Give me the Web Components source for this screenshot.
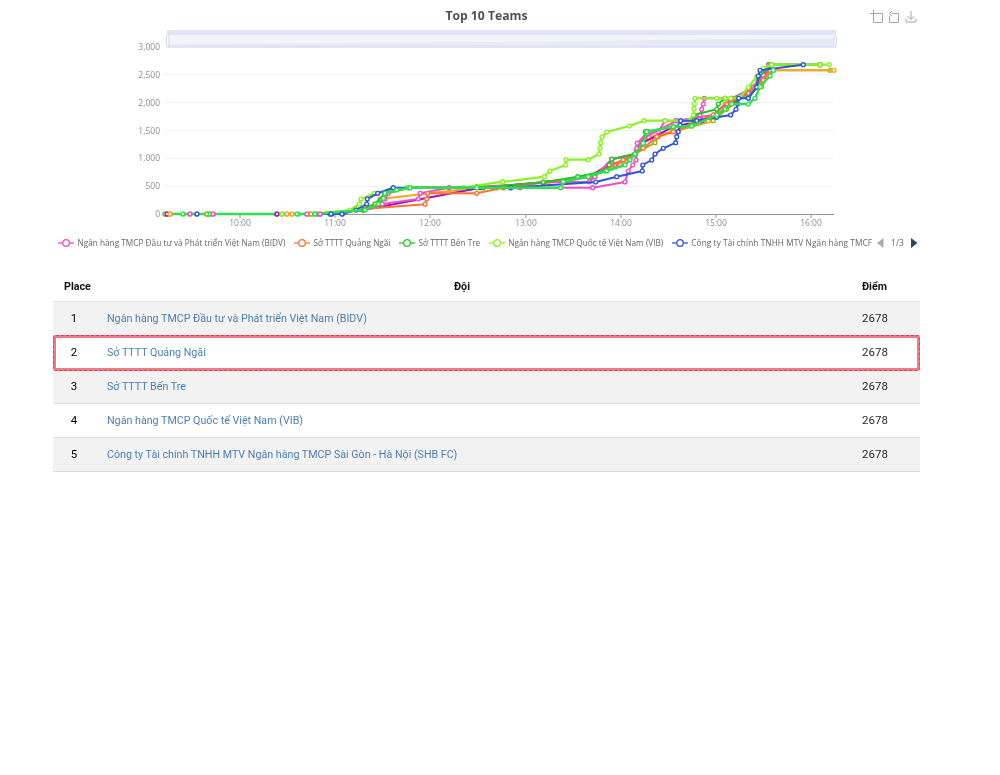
<!DOCTYPE html>
<html lang="vi"><head><meta charset="utf-8"><title>Top 10 Teams</title>
<style>html,body{margin:0;background:#fff;font-family:Roboto,"Liberation Sans",sans-serif}
body{height:775px;overflow:hidden;padding:0 80px 0 53px;box-sizing:border-box;filter:blur(.35px)}</style></head>
<body>
<score-chart title-text="Top 10 Teams"></score-chart>
<team-table>
<team-row place="1" score="2678">Ngân hàng TMCP Đầu tư và Phát triển Việt Nam (BIDV)</team-row>
<team-row place="2" score="2678" marked>Sở TTTT Quảng Ngãi</team-row>
<team-row place="3" score="2678">Sở TTTT Bến Tre</team-row>
<team-row place="4" score="2678">Ngân hàng TMCP Quốc tế Việt Nam (VIB)</team-row>
<team-row place="5" score="2678">Công ty Tài chính TNHH MTV Ngân hàng TMCP Sài Gòn - Hà Nội (SHB FC)</team-row>
</team-table>
<script>
const SERIES=[
{c:'#a3b50c',w:2,a:[108,642,235,642,455,642,540,642,700,630,745,612,765,580,840,563,1060,563],b:[130,547,270,530,330,495,370,480,405,462,465,428,475,410,520,395,640,362,680,328,745,280,785,260,800,225,820,211,990,211]},
{c:'#f5a623',w:2,a:[120,642,485,642,540,642,680,630,735,612,750,597,1043,563],b:[145,547,265,530,360,495,405,462,445,412,515,395,625,362,675,312,790,245,820,211,1002,211]},
{c:'#a012c0',w:2,a:[110,642,440,642,560,642,700,630,1052,563],b:[130,547,268,530,325,495,335,478,405,462,430,428,520,380,605,362,650,345,720,292,775,245,815,194,960,194]},
{c:'#f24bc4',w:2,a:[250,642,530,642,570,642,700,630,757,612,865,597,871,580,957,563,1100,563],b:[60,563,278,563,375,546,385,513,398,495,408,480,410,450,412,430,445,395,475,395,495,362,528,362,575,362,600,345,605,328,610,312,613,295,676,295,695,295,720,292,745,280,760,262,775,240,795,210,806,194,960,194]},
{c:'#f24bc4',w:2,a:[180,642,470,642,570,642,700,630,745,612,765,597,775,580,835,563,1040,560,1200,553],b:[130,547,268,545,285,530,335,478,345,495,405,462,410,445,435,412,530,362,640,345,695,295,760,262,790,225,806,194]},
{c:'#ff7138',w:2,a:[120,642,600,642,690,628,885,613,890,597,893,580,1040,580,1120,563],b:[10,563,130,547,270,530,370,480,430,445,470,410,520,395,640,345,680,312,720,292,790,240,810,211]},
{c:'#25c425',w:2,a:[230,642,600,642,700,630,735,612,765,580,835,563,1060,563],b:[130,547,233,530,315,513,328,495,335,478,405,462,430,428,436,395,520,380,575,378,582,345,650,328,655,312,676,295,715,293,745,293,770,262,778,230,812,194,960,194]},
{c:'#87f522',w:2.2,a:[160,642,240,642,455,642,555,642,660,630,688,612,693,597,733,580,830,563,1000,563,1118,545],b:[8,546,133,530,150,513,197,495,198,479,265,479,297,462,300,445,302,428,306,411,320,396,388,378,432,362,495,362,568,362,580,345,582,326,583,312,585,295,650,295,676,295,692,295,720,292,745,262,770,230,790,205,815,194,960,194,988,194]},
{c:'#2d55dc',w:2,a:[200,642,605,642,637,642,678,630,710,612,712,597,743,580,790,563,1142,563],b:[32,563,287,546,350,530,427,513,428,495,455,480,465,462,490,445,527,428,530,410,535,395,540,375,542,362,590,362,650,352,692,345,708,328,713,312,716,295,745,295,770,262,775,228,780,211,910,194]},
{c:'#2fe04e',w:2.4,a:[105,642,240,642,505,642,550,642,705,630,745,612,760,595,765,580,800,570,840,563,1040,563],b:[182,563,190,545,265,530,320,513,375,495,390,480,405,462,430,430,440,395,520,380,575,378,650,345,675,328,695,312,745,312,765,295,780,260,810,228,820,211]}
];
const DOTS=[[165,'#a3b50c'],[167,'#a012c0'],[170,'#f5a623'],[183,'#2fe04e'],[190,'#f24bc4'],[197,'#2d55dc'],[207,'#a3b50c'],[210,'#2fe04e'],[213,'#f24bc4'],[277,'#a012c0'],[282,'#87f522'],[287,'#f5a623'],[292,'#f5a623'],[297,'#2fe04e'],[307,'#f24bc4'],[311,'#a3b50c'],[315,'#2fe04e'],[320,'#f24bc4'],[331,'#2d55dc'],[342,'#2d55dc']];
function seriesSvg(){
 let out='';
 for(const s of SERIES){
  const p=[];
  for(let i=0;i<s.a.length;i+=2)p.push([130+s.a[i]/3,s.a[i+1]/3]);
  for(let i=0;i<s.b.length;i+=2)p.push([500+s.b[i]/3,s.b[i+1]/3]);
  out+=`<polyline fill="none" stroke="${s.c}" stroke-width="${s.w}" stroke-linejoin="round" points="${p.map(q=>q[0].toFixed(1)+','+q[1].toFixed(1)).join(' ')}"/>`;
  out+=p.map(q=>`<circle cx="${q[0].toFixed(1)}" cy="${q[1].toFixed(1)}" r="1.9" fill="#fff" stroke="${s.c}" stroke-width="1.4"/>`).join('');
 }
 out+=DOTS.map(d=>`<circle cx="${d[0]}" cy="214" r="1.9" fill="#fff" stroke="${d[1]}" stroke-width="1.4"/>`).join('');
 return out;
}
class ScoreChart extends HTMLElement{
 constructor(){super();
  const grid=[[74.6,'2,500'],[102.5,'2,000'],[130.7,'1,500'],[158.4,'1,000'],[186.4,'500']];
  const times=[[240,'10:00'],[335,'11:00'],[430,'12:00'],[526,'13:00'],[621,'14:00'],[716,'15:00'],[811,'16:00']];
  const legend=[['#f24bc4','Ngân hàng TMCP Đầu tư và Phát triển Việt Nam (BIDV)'],['#ff7138','Sở TTTT Quảng Ngãi'],['#25c425','Sở TTTT Bến Tre'],['#87f522','Ngân hàng TMCP Quốc tế Việt Nam (VIB)'],['#2d55dc','Công ty Tài chính TNHH MTV Ngân hàng TMCF']];
  this.attachShadow({mode:'open'}).innerHTML=`<style>
  :host{display:block;color:#666}
  .head{height:30px;display:flex;align-items:center;justify-content:center;position:relative}
  h2{margin:0;font:700 12.2px "Open Sans",sans-serif;color:#505050}
  .tools{position:absolute;right:2px;top:10px;display:flex;gap:3px}
  .tools svg{display:block;width:14px;height:14px;fill:none;stroke:#a6a6a6;stroke-width:1}
  svg.plot{display:block;width:867px;height:203px}
  svg.plot text{font:8.5px "Open Sans",sans-serif;fill:#8b8d95}
  .legend{height:19px;display:flex;align-items:center;padding:0 3px 0 5px;font:8.25px "Open Sans",sans-serif;color:#666;white-space:nowrap}
  .item{display:flex;align-items:center;gap:3.5px;margin-right:8.5px;flex:none}
  .item:nth-child(5){margin-right:0}
  .item:nth-child(5) span{letter-spacing:.09px}
  .item svg{width:16px;height:10px;flex:none}
  .item span{display:block}
  .pager{display:flex;align-items:center;gap:7px;margin-left:5px;font-size:8.5px;flex:none}
  </style>
  <div class="head"><h2>${this.getAttribute('title-text')}</h2>
   <div class="tools">
    <svg viewBox="0 0 14 14"><path d="M3.500 0v12.500h9v-9H0"/></svg>
    <svg viewBox="0 0 14 14"><path d="M4.500 3.500h7v9h-9V5.500M5 1 2.500 3.500 5 6"/></svg>
    <svg viewBox="0 0 14 14"><path d="M2 8.500v3.500h10V8.500M7 1v8.500M3.500 6 7 9.500 10.500 6"/></svg>
   </div></div>
  <svg class="plot" viewBox="53 30 867 203">
   <rect x="167" y="30" width="669" height="18" fill="#dfe5f5"/>
   <rect x="167" y="35" width="669" height="9.500" fill="#f3f5fb"/>
   <path d="M167 44h669v-5.500C700 39 560 41 500 42z" fill="#e6eaf6"/>
   <rect x="166.500" y="35" width="2.500" height="11" rx="1.200" fill="#fff" stroke="#c3cce6" stroke-width=".8"/>
   <rect x="834" y="36" width="2.500" height="10" rx="1.200" fill="#fff" stroke="#c3cce6" stroke-width=".8"/>
   ${grid.map(g=>`<line x1="165" x2="834" y1="${g[0]}" y2="${g[0]}" stroke="#eef1f8"/><text x="160" y="${g[0]+3}" text-anchor="end">${g[1]}</text>`).join('')}
   <text x="160" y="49.500" text-anchor="end">3,000</text>
   <text x="160" y="216.500" text-anchor="end">0</text>
   <line x1="165" x2="834" y1="214.500" y2="214.500" stroke="#8f939c"/>
   ${times.map(t=>`<line x1="${t[0]}" x2="${t[0]}" y1="214.500" y2="218" stroke="#8f939c"/><text x="${t[0]}" y="226" text-anchor="middle">${t[1]}</text>`).join('')}
   ${seriesSvg()}
  </svg>
  <div class="legend">
   ${legend.map((l,i)=>`<div class="item"><svg viewBox="0 0 16 10"><path d="M0 5h16" stroke="${l[0]}" stroke-width="1.300"/><circle cx="8" cy="5" r="3.300" fill="#fff" stroke="${l[0]}" stroke-width="1.300"/></svg><span>${l[1]}</span></div>`).join('')}
   <div class="pager"><svg width="7" height="10" viewBox="0 0 7 10"><path d="M6.500 0v10L0 5z" fill="#aaa"/></svg><span>1/3</span><svg width="7" height="10" viewBox="0 0 7 10"><path d="M0 0v10l6.500-5z" fill="#2f4554"/></svg></div>
  </div>`;
 }
}
customElements.define('score-chart',ScoreChart);
class TeamTable extends HTMLElement{
 constructor(){super();
  this.attachShadow({mode:'open'}).innerHTML=`<style>
  :host{display:block;margin-top:16px;font:10.7px/17px Roboto,"Noto Sans",sans-serif;color:#222}
  .h{display:grid;grid-template-columns:54px 710px 103px;height:34px;align-items:center;font-weight:700;color:#111;font-size:10.7px;box-sizing:border-box;padding-top:4px;border-bottom:1px solid #e4e4e4}
  .h span:first-child{padding-left:11px}.h span:nth-child(2){text-align:center}.h span:last-child{padding-left:45px}
  </style><div class="h"><span>Place</span><span>Đội</span><span>Điểm</span></div><slot></slot>`;
 }
}
customElements.define('team-table',TeamTable);
class TeamRow extends HTMLElement{
 constructor(){super();
  const marked=this.hasAttribute('marked');
  this.attachShadow({mode:'open'}).innerHTML=`<style>
  :host{display:grid;grid-template-columns:42px 12px 710px 103px;height:34px;align-items:center;position:relative;z-index:${marked?1:0};box-sizing:border-box;border-bottom:1px solid ${marked?'transparent':'#ddd'};background:${+this.getAttribute('place')%2?'#f2f2f2':'#fff'};color:#222}
  .p{text-align:center;color:#000;font-size:11.5px}.n{grid-column:3;color:#4a7fb5}.s{padding-left:45px;font-size:11.5px;color:#2a2a2a}
  .mark{position:absolute;left:0;right:0;top:-1px;bottom:-2px;box-sizing:border-box;border:3px solid rgba(235,70,92,.72);border-radius:3px;pointer-events:none}
  .mark::after{content:"";position:absolute;inset:-3px;border:1px dashed rgba(205,30,60,.6);border-radius:3px}
  </style><span class="p">${this.getAttribute('place')}</span><span class="n"><slot></slot></span><span class="s">${this.getAttribute('score')}</span>${marked?'<div class="mark"></div>':''}`;
 }
}
customElements.define('team-row',TeamRow);
</script>
</body></html>
